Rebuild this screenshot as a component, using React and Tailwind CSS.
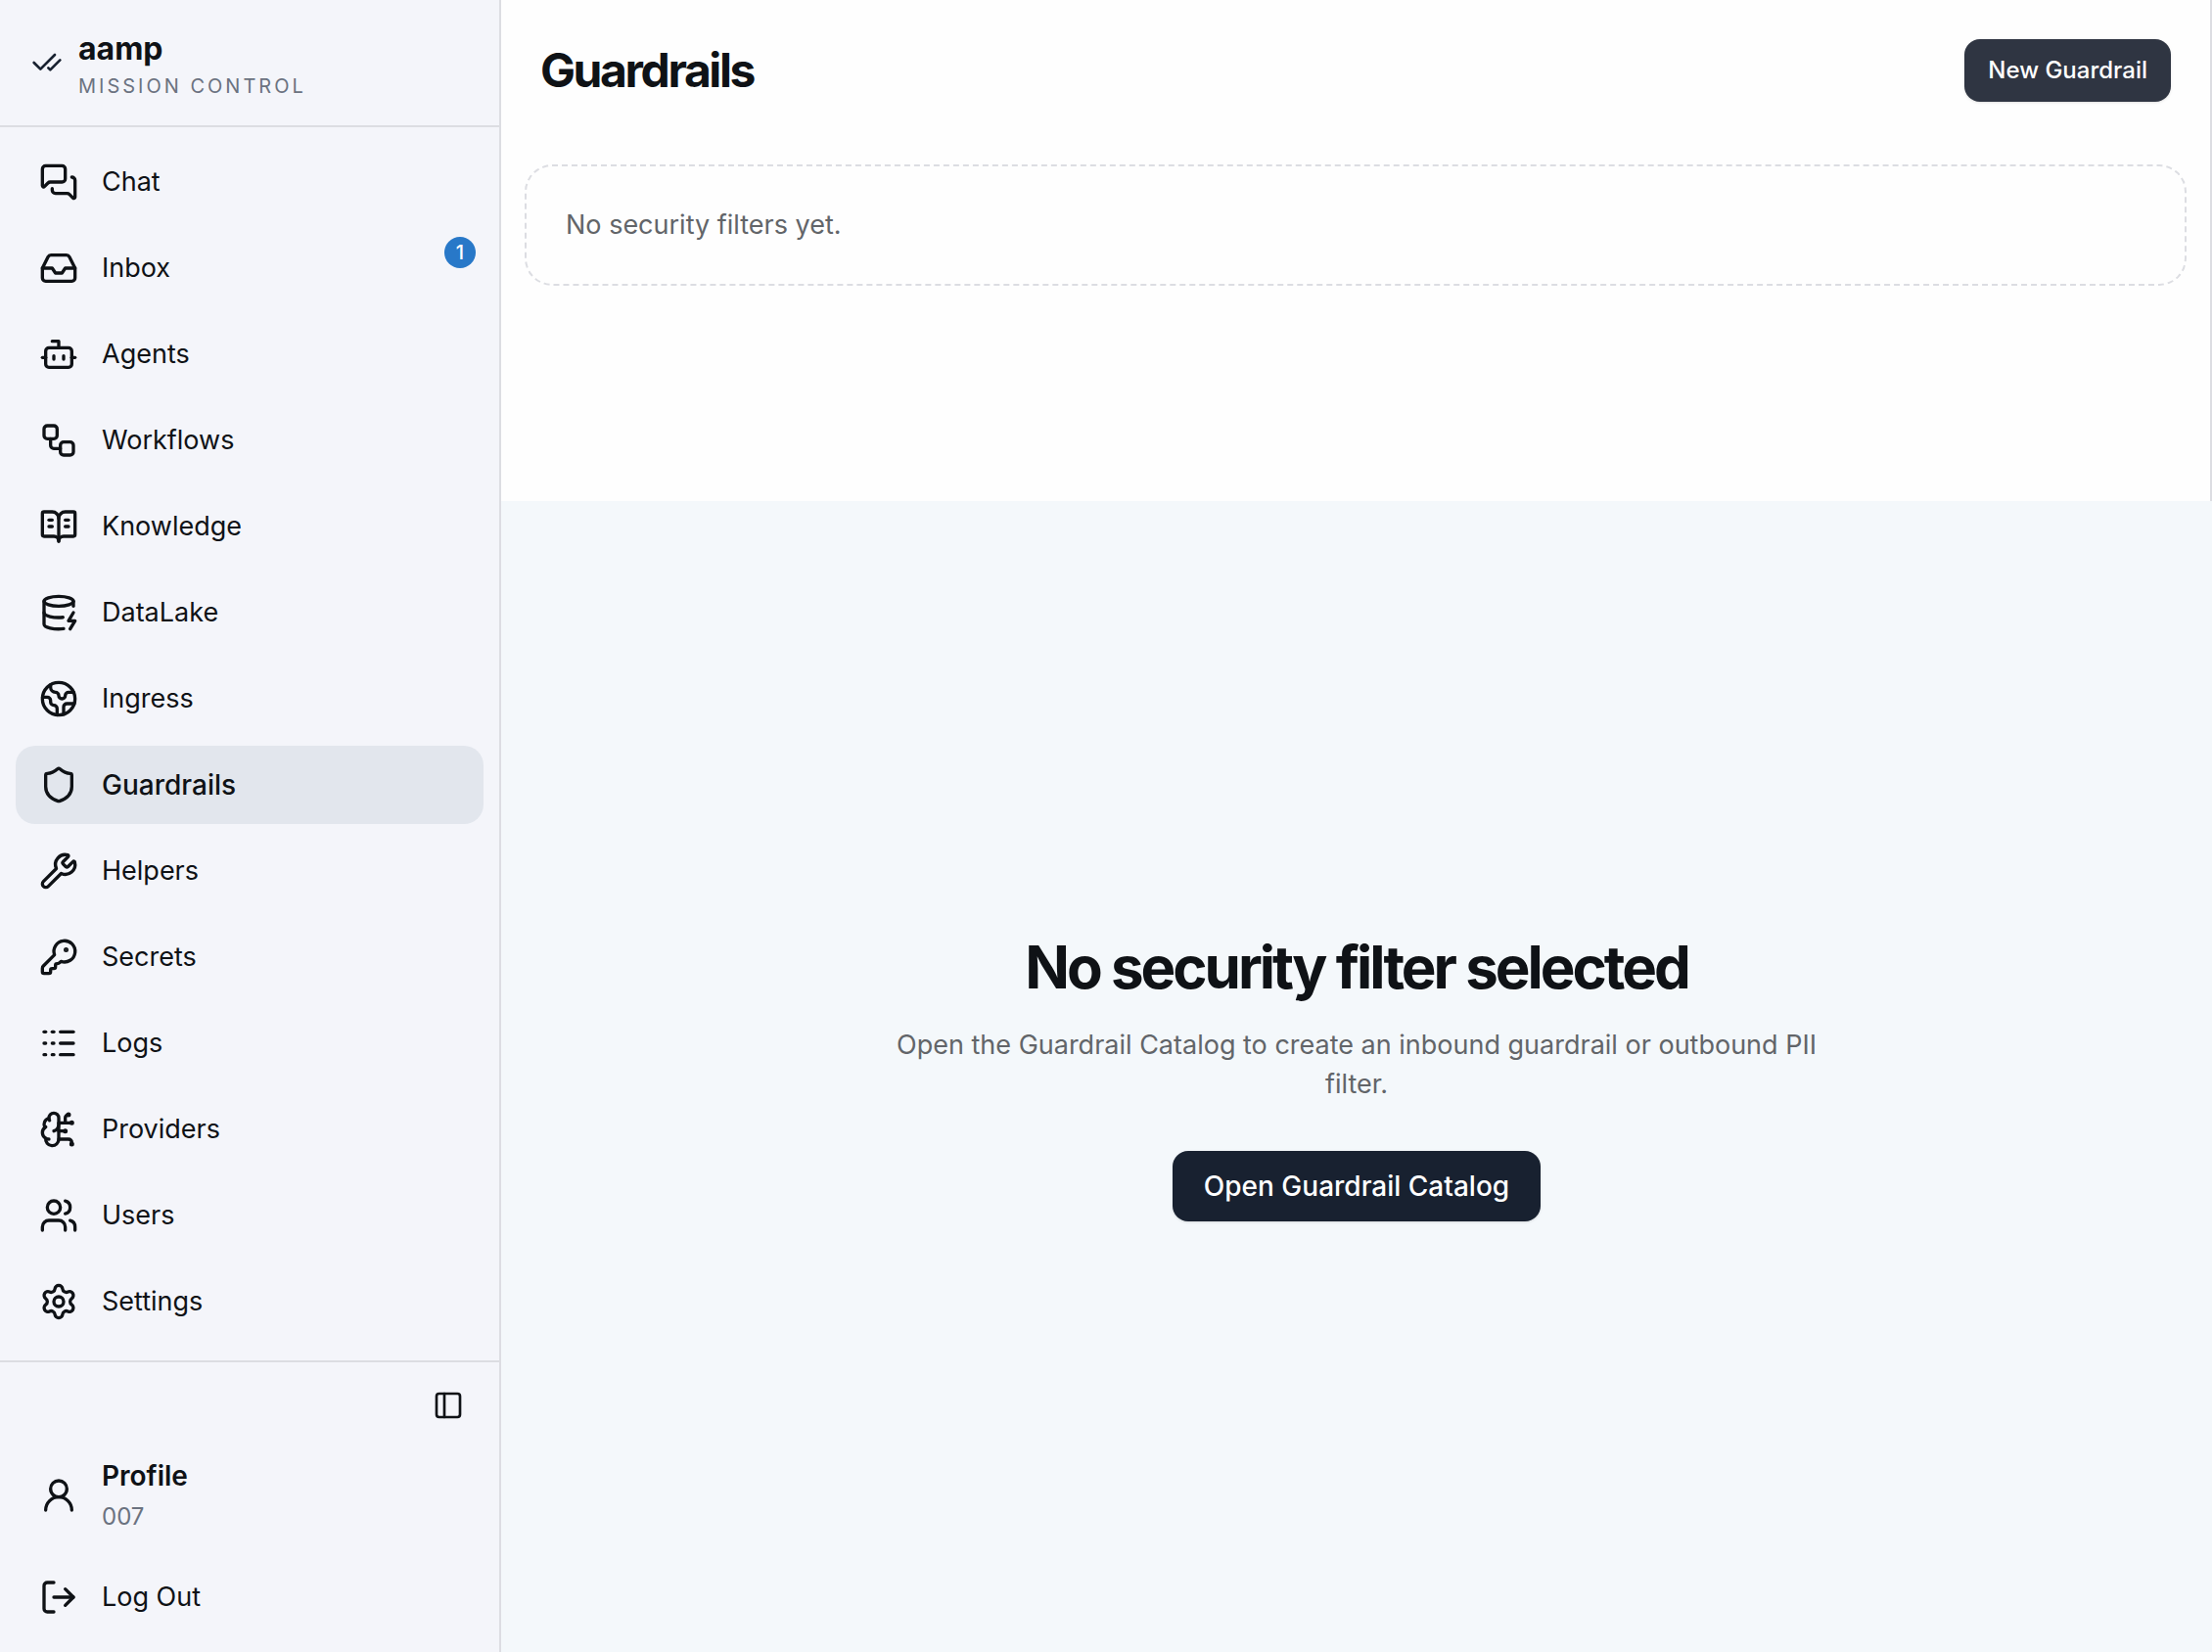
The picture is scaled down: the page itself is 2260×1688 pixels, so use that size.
import {
  BookOpenText,
  Bot,
  BrainCircuit,
  CheckCheck,
  DatabaseZap,
  Earth,
  Inbox,
  KeyRound,
  LogOut,
  Logs,
  MessagesSquare,
  PanelLeft,
  Settings,
  Shield,
  UserRound,
  Users,
  Workflow,
  Wrench,
} from "lucide-react";

const NAV = [
  { label: "Chat", icon: MessagesSquare },
  { label: "Inbox", icon: Inbox, badge: 1 },
  { label: "Agents", icon: Bot },
  { label: "Workflows", icon: Workflow },
  { label: "Knowledge", icon: BookOpenText },
  { label: "DataLake", icon: DatabaseZap },
  { label: "Ingress", icon: Earth },
  { label: "Guardrails", icon: Shield, active: true },
  { label: "Helpers", icon: Wrench },
  { label: "Secrets", icon: KeyRound },
  { label: "Logs", icon: Logs },
  { label: "Providers", icon: BrainCircuit },
  { label: "Users", icon: Users },
  { label: "Settings", icon: Settings },
];

function NavItem({ label, icon: Icon, badge, active }) {
  return (
    <li>
      <a
        href="#"
        aria-current={active ? "page" : undefined}
        className={
          active
            ? "relative flex h-20 items-center gap-6 rounded-[20px] bg-[#e2e6ed] px-6 text-[28px] leading-10 font-medium"
            : "relative flex h-20 items-center gap-6 rounded-[20px] px-6"
        }
      >
        <Icon className="size-10 shrink-0" />
        <span>{label}</span>
        {badge && (
          <span className="absolute top-2 right-2 flex size-8 items-center justify-center rounded-full bg-[#2878c8] text-xl font-medium text-white">
            {badge}
          </span>
        )}
      </a>
    </li>
  );
}

function Sidebar() {
  return (
    <aside className="flex w-128 shrink-0 flex-col border-r-2 border-[#dcdde2] bg-[#f4f5fa]">
      <div className="flex h-[130px] items-center gap-4 border-b-2 border-[#dcdde2] px-8">
        <CheckCheck className="size-8 shrink-0 text-[#182130]" />
        <div>
          <div className="text-[32px] leading-12 font-bold">aamp</div>
          <div className="text-xl leading-7 tracking-[0.15em] text-[#6b7280] uppercase">
            Mission Control
          </div>
        </div>
      </div>
      <nav className="flex-1 p-4">
        <ul className="flex flex-col gap-2">
          {NAV.map((item) => (
            <NavItem key={item.label} {...item} />
          ))}
        </ul>
      </nav>
      <div className="flex flex-col border-t-2 border-[#dcdde2] px-4 pt-2 pb-4">
        <button
          type="button"
          aria-label="Toggle sidebar"
          className="flex size-18 items-center justify-center self-end rounded-[20px]"
        >
          <PanelLeft className="size-8" />
        </button>
        <a href="#" className="mb-2 flex h-28 items-center gap-6 rounded-[20px] px-6">
          <UserRound className="size-10 shrink-0" />
          <span className="flex flex-col">
            <span className="text-[28px] leading-11 font-semibold">Profile</span>
            <span className="text-2xl leading-10 text-[#6b7280]">007</span>
          </span>
        </a>
        <button type="button" className="flex h-20 items-center gap-6 rounded-[20px] px-6">
          <LogOut className="size-10 shrink-0" />
          <span>Log Out</span>
        </button>
      </div>
    </aside>
  );
}

export default function App() {
  return (
    <div className="flex min-h-screen bg-[#f4f8fb] font-['Inter',sans-serif] text-[27px] leading-10 text-[#0f1216]">
      <Sidebar />
      <main className="flex min-w-0 flex-1 flex-col">
        <section className="min-h-128 border-r-2 border-[#dcdde2] bg-[#fefefe]">
          <header className="flex items-center justify-between p-10">
            <h1 className="text-5xl leading-16 font-bold tracking-tighter">Guardrails</h1>
            <button
              type="button"
              className="h-16 rounded-2xl bg-[#2f3542] px-6 text-2xl font-medium text-white shadow-sm"
            >
              New Guardrail
            </button>
          </header>
          <div className="p-6">
            <p className="rounded-[28px] border-2 border-dashed border-[#dcdde2] p-10 text-[#626569]">
              No security filters yet.
            </p>
          </div>
        </section>
        <section className="flex flex-1 flex-col items-center justify-center">
          <h2 className="text-6xl leading-18 font-bold tracking-tighter">
            No security filter selected
          </h2>
          <p className="mt-6 max-w-[1000px] text-center text-[#626569]">
            Open the Guardrail Catalog to create an inbound guardrail or outbound PII filter.
          </p>
          <button
            type="button"
            className="mt-12 h-18 rounded-2xl bg-[#182130] px-8 text-[28px] leading-10 font-medium text-white shadow-sm"
          >
            Open Guardrail Catalog
          </button>
        </section>
      </main>
    </div>
  );
}
